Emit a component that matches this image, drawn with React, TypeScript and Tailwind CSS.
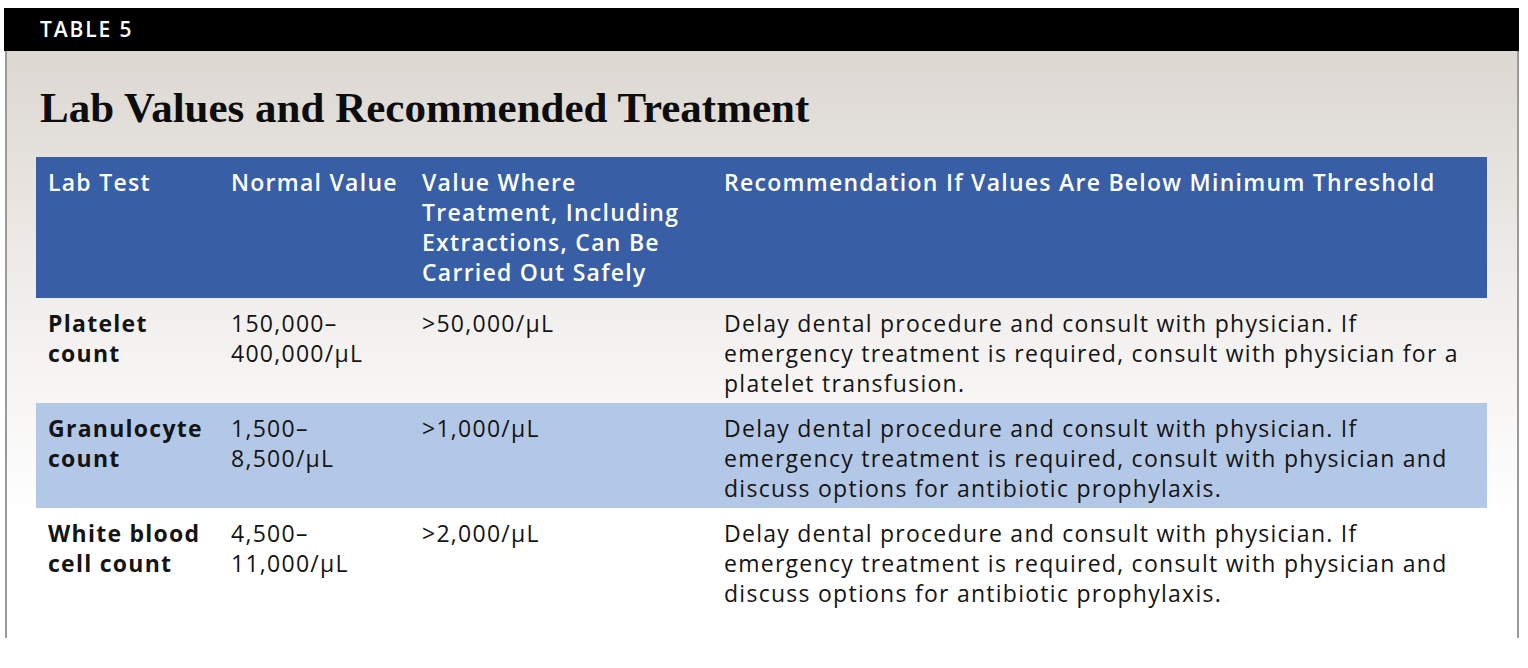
const rows = [
  {
    test: ["Platelet", "count"],
    normal: ["150,000–", "400,000/µL"],
    safe: ">50,000/µL",
    rec: [
      "Delay dental procedure and consult with physician. If",
      "emergency treatment is required, consult with physician for a",
      "platelet transfusion.",
    ],
    shaded: false,
  },
  {
    test: ["Granulocyte", "count"],
    normal: ["1,500–", "8,500/µL"],
    safe: ">1,000/µL",
    rec: [
      "Delay dental procedure and consult with physician. If",
      "emergency treatment is required, consult with physician and",
      "discuss options for antibiotic prophylaxis.",
    ],
    shaded: true,
  },
  {
    test: ["White blood", "cell count"],
    normal: ["4,500–", "11,000/µL"],
    safe: ">2,000/µL",
    rec: [
      "Delay dental procedure and consult with physician. If",
      "emergency treatment is required, consult with physician and",
      "discuss options for antibiotic prophylaxis.",
    ],
    shaded: false,
  },
];

function Lines({ lines }: { lines: string[] }) {
  return (
    <>
      {lines.map((l, i) => (
        <span key={i} className="block whitespace-nowrap">
          {l}
        </span>
      ))}
    </>
  );
}

export default function App() {
  const cell = "pl-3 pt-[10px]";

  return (
    <div className="min-h-screen bg-white pt-2 pl-1 font-['Open_Sans',sans-serif]">
      {/* Label bar */}
      <div className="flex h-[43px] w-[1515px] items-center bg-black pl-9">
        <span className="text-[21px] font-semibold tracking-[0.09em] text-white">
          TABLE 5
        </span>
      </div>

      {/* Panel */}
      <div className="ml-px h-[587px] w-[1514px] border-x-2 border-[#9a9a9c] bg-gradient-to-b from-[#dcd7d1] via-[#f2f0ee] via-45% to-white to-80% px-[29px]">
        <h1 className="pt-[33px] pb-[25px] pl-1 font-['Liberation_Serif',serif] text-[43px] leading-[48px] font-bold text-[#0d0d0d]">
          Lab Values and Recommended Treatment
        </h1>

        <div className="grid w-[1451px] grid-cols-[183px_191px_302px_775px] text-[23px] leading-[30px] tracking-[0.055em] text-[#141414]">
          {/* Header */}
          <div className="col-span-4 grid h-[141px] grid-cols-subgrid bg-[#385ea5] font-semibold text-white">
            <div className={cell}>Lab Test</div>
            <div className={cell}>Normal Value</div>
            <div className={cell}>
              <Lines
                lines={[
                  "Value Where",
                  "Treatment, Including",
                  "Extractions, Can Be",
                  "Carried Out Safely",
                ]}
              />
            </div>
            <div className={cell}>
              <Lines lines={["Recommendation If Values Are Below Minimum Threshold"]} />
            </div>
          </div>

          {rows.map((r, i) => (
            <div
              key={i}
              className={`col-span-4 grid h-[105px] grid-cols-subgrid ${
                r.shaded ? "bg-[#b3c8e6]" : ""
              }`}
            >
              <div className={`${cell} font-bold`}>
                <Lines lines={r.test} />
              </div>
              <div className={cell}>
                <Lines lines={r.normal} />
              </div>
              <div className={cell}>{r.safe}</div>
              <div className={cell}>
                <Lines lines={r.rec} />
              </div>
            </div>
          ))}
        </div>
      </div>
    </div>
  );
}
